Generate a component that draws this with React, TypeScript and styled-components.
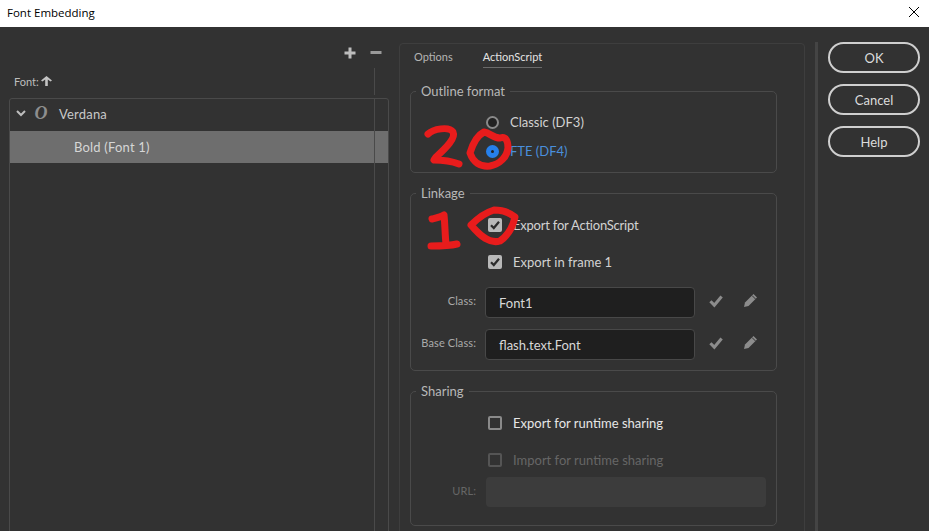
import React from 'react';
import styled, { createGlobalStyle } from 'styled-components';

const BG = '#323232';
const LINE = '#4a4a4a';
const TEXT = '#c8c8c8';
const FONT = '"Lato", "Noto Sans", sans-serif';

const GlobalStyle = createGlobalStyle`
  html, body {
    margin: 0;
    padding: 0;
    background: ${BG};
  }
`;

const Dialog = styled.div`
  position: relative;
  width: 929px;
  height: 531px;
  overflow: hidden;
  display: flex;
  flex-direction: column;
  background: ${BG};
  font-family: ${FONT};
  font-size: 13px;
  color: ${TEXT};
`;

const TitleBar = styled.div`
  height: 27px;
  flex: none;
  display: flex;
  align-items: center;
  justify-content: space-between;
  padding: 0 9px 3px 7px;
  box-sizing: border-box;
  background: #fff;
  color: #000;
  font-family: "Open Sans", sans-serif;
  font-size: 11.5px;
`;

const Body = styled.div`
  flex: 1;
  display: flex;
  padding-top: 15px;
  min-height: 0;
`;

const FontsColumn = styled.div`
  width: 380px;
  margin: 0 10px 0 9px;
  flex: none;
  display: flex;
  flex-direction: column;
`;

const FontsToolbar = styled.div`
  height: 26px;
  display: flex;
  align-items: flex-start;
  justify-content: flex-end;
  gap: 14px;
  padding: 5px 7px 0 0;
  box-sizing: border-box;
`;

const FontsHeader = styled.div`
  height: 27px;
  display: flex;
  align-items: flex-start;
  gap: 2px;
  padding-left: 5px;
  font-size: 11px;
  line-height: 14px;
  color: #bdbdbd;
  box-sizing: border-box;
  padding-top: 7px;
  border-right: 1px solid ${LINE};
  margin-right: 14px;
  margin-bottom: 3px;
`;

const FontTree = styled.div`
  flex: 1;
  margin-bottom: -10px;
  display: flex;
  flex-direction: column;
  border: 1px solid ${LINE};
  border-radius: 3px 3px 0 0;
`;

const TreeRow = styled.div<{ $selected?: boolean }>`
  height: 32px;
  flex: none;
  display: flex;
  letter-spacing: 0.2px;
  background: ${(p) => (p.$selected ? '#6e6e6e' : 'transparent')};
  color: ${(p) => (p.$selected ? '#d6d6d6' : TEXT)};
`;

const TreeCell = styled.div<{ $indent: number; $lift: number }>`
  flex: 1;
  display: flex;
  align-items: center;
  padding-left: ${(p) => p.$indent}px;
  padding-bottom: ${(p) => p.$lift}px;
  border-right: 1px solid ${LINE};
  margin-right: 13px;
`;

const TreeFiller = styled.div`
  flex: 1;
  border-right: 1px solid ${LINE};
  margin-right: 13px;
`;

const FontGlyph = styled.span`
  width: 14px;
  margin: 0 11px 0 8px;
  font-family: "Liberation Serif", serif;
  font-style: italic;
  font-weight: bold;
  font-size: 18px;
  color: #8e8e8e;
  text-align: center;
`;

const SettingsPanel = styled.div`
  width: 406px;
  flex: none;
  margin-top: 1px;
  margin-bottom: -10px;
  padding: 0 27px 0 10px;
  box-sizing: border-box;
  border: 1px solid #3e3e3e;
  border-radius: 4px 4px 0 0;
  display: flex;
  flex-direction: column;
`;

const Tabs = styled.div`
  height: 39px;
  flex: none;
  display: flex;
  gap: 30px;
  padding-left: 4px;
  font-size: 11px;
`;

const Tab = styled.div<{ $active?: boolean }>`
  height: 23px;
  line-height: 25px;
  color: ${(p) => (p.$active ? '#e4e4e4' : '#b4b4b4')};
  border-bottom: 1px solid ${(p) => (p.$active ? '#6a6a6a' : 'transparent')};
`;

const Group = styled.fieldset<{ $height: number }>`
  margin: 0 0 12px;
  padding: 0;
  height: ${(p) => p.$height}px;
  box-sizing: border-box;
  min-width: 0;
  border: 1px solid ${LINE};
  border-radius: 5px;
  display: flex;
  flex-direction: column;
`;

const GroupTitle = styled.legend`
  margin-left: 5px;
  padding: 0 5px;
  font-size: 13px;
  line-height: 16px;
  color: #b8b8b8;
`;

const Options = styled.div<{ $top: number; $gap: number; $left: number }>`
  display: flex;
  flex-direction: column;
  gap: ${(p) => p.$gap}px;
  padding: ${(p) => p.$top}px 0 0 ${(p) => p.$left}px;
`;

const OptionRow = styled.div<{ $tone?: 'normal' | 'blue' | 'muted' | 'bright'; $tight?: boolean }>`
  height: 18px;
  display: flex;
  align-items: center;
  letter-spacing: ${(p) => (p.$tight ? '-0.22px' : 'normal')};
  color: ${(p) =>
    p.$tone === 'blue' ? '#4a8fdc' : p.$tone === 'muted' ? '#666' : p.$tone === 'bright' ? '#e6e6e6' : '#d2d2d2'};
`;

const Radio = styled.span<{ $on?: boolean }>`
  width: 13px;
  height: 13px;
  margin-right: 11px;
  box-sizing: border-box;
  border-radius: 50%;
  border: ${(p) => (p.$on ? '5.5px solid #2680eb' : '2px solid #8a8a8a')};
  background: #222;
`;

const CheckBox = styled.span<{ $checked?: boolean; $muted?: boolean }>`
  width: 14px;
  height: 14px;
  margin-right: 11px;
  box-sizing: border-box;
  border-radius: 2px;
  display: flex;
  align-items: center;
  justify-content: center;
  border: 2px solid ${(p) => (p.$checked ? '#b9b9b9' : p.$muted ? '#555' : '#8a8a8a')};
  background: ${(p) => (p.$checked ? '#b9b9b9' : 'transparent')};
`;

const Fields = styled.div<{ $top: number }>`
  display: flex;
  flex-direction: column;
  gap: 11px;
  padding-top: ${(p) => p.$top}px;
`;

const FieldRow = styled.div`
  display: flex;
  align-items: center;
`;

const FieldLabel = styled.span<{ $muted?: boolean }>`
  width: 65px;
  flex: none;
  margin-right: 9px;
  text-align: right;
  font-size: 11px;
  letter-spacing: 0.1px;
  padding-bottom: 4px;
  color: ${(p) => (p.$muted ? '#666' : '#aaa')};
`;

const TextInput = styled.div`
  width: 210px;
  height: 31px;
  flex: none;
  box-sizing: border-box;
  padding-left: 13px;
  line-height: 31px;
  border: 1px solid #484848;
  border-radius: 4px;
  background: #1f1f1f;
  color: #d8d8d8;
`;

const DisabledInput = styled.div`
  width: 280px;
  height: 30px;
  margin-left: 1px;
  border-radius: 4px;
  background: #3c3c3c;
`;

const FieldIcons = styled.div`
  display: flex;
  align-items: center;
  gap: 20px;
  padding: 0 0 4px 14px;
`;

const Divider = styled.div`
  width: 3px;
  flex: none;
  margin: 0 10px 0 10px;
  margin-bottom: -10px;
  background: #444;
`;

const Buttons = styled.div`
  display: flex;
  flex-direction: column;
  gap: 11px;
`;

const DialogButton = styled.button`
  width: 92px;
  height: 31px;
  padding: 0;
  border: 2px solid #cfcfcf;
  border-radius: 16px;
  background: transparent;
  color: #dcdcdc;
  font-family: ${FONT};
  font-size: 13px;
`;

const Scribbles = styled.svg`
  position: absolute;
  left: 0;
  top: 0;
  pointer-events: none;
`;

const Tick = ({ size = 10, color = '#2c2c2c' }: { size?: number; color?: string }) => (
  <svg width={size} height={size} viewBox="0 0 10 10">
    <path d="M1 5.2 L3.8 8 L9 1.8" fill="none" stroke={color} strokeWidth="2.2" />
  </svg>
);

const Pencil = () => (
  <svg width="15" height="15" viewBox="0 0 15 15">
    <path d="M10.5 1 L14 4.5 L5.5 13 L1 14 L2 9.5 Z" fill="#8c8c8c" />
    <path d="M9 2.5 L12.5 6" stroke="#323232" strokeWidth="1" />
  </svg>
);

const App = () => (
  <Dialog>
    <GlobalStyle />
    <TitleBar>
      <span>Font Embedding</span>
      <svg width="12" height="12" viewBox="0 0 12 12">
        <path d="M1 1 L11 11 M11 1 L1 11" stroke="#000" strokeWidth="1" />
      </svg>
    </TitleBar>
    <Body>
      <FontsColumn>
        <FontsToolbar>
          <svg width="12" height="12" viewBox="0 0 12 12">
            <path d="M4.5 0.5 H7.5 V4.5 H11.5 V7.5 H7.5 V11.5 H4.5 V7.5 H0.5 V4.5 H4.5 Z" fill="#bdbdbd" />
          </svg>
          <svg width="12" height="12" viewBox="0 0 12 12">
            <rect x="0.5" y="4" width="11" height="3" fill="#9a9a9a" />
          </svg>
        </FontsToolbar>
        <FontsHeader>
          <span>Font:</span>
          <svg width="11" height="10" viewBox="0 0 11 10" style={{ marginTop: 1 }}>
            <path d="M5.5 0 L11 4.5 L9.5 5.5 L6.8 3.6 V10 H4.2 V3.6 L1.5 5.5 L0 4.5 Z" fill="#c4c4c4" />
          </svg>
        </FontsHeader>
        <FontTree>
          <TreeRow>
            <TreeCell $indent={6} $lift={3}>
              <svg width="10" height="7" viewBox="0 0 10 7">
                <path d="M1 1 L5 5 L9 1" fill="none" stroke="#bdbdbd" strokeWidth="2" />
              </svg>
              <FontGlyph>O</FontGlyph>
              Verdana
            </TreeCell>
          </TreeRow>
          <TreeRow $selected>
            <TreeCell $indent={64} $lift={1}>Bold (Font 1)</TreeCell>
          </TreeRow>
          <TreeFiller />
        </FontTree>
      </FontsColumn>

      <SettingsPanel>
        <Tabs>
          <Tab>Options</Tab>
          <Tab $active>ActionScript</Tab>
        </Tabs>
        <Group $height={90}>
          <GroupTitle>Outline format</GroupTitle>
          <Options $top={14} $gap={11} $left={75}>
            <OptionRow>
              <Radio />
              Classic (DF3)
            </OptionRow>
            <OptionRow $tone="blue">
              <Radio $on />
              FTE (DF4)
            </OptionRow>
          </Options>
        </Group>
        <Group $height={186}>
          <GroupTitle>Linkage</GroupTitle>
          <Options $top={15} $gap={19} $left={77}>
            <OptionRow $tight>
              <CheckBox $checked>
                <Tick />
              </CheckBox>
              Export for ActionScript
            </OptionRow>
            <OptionRow>
              <CheckBox $checked>
                <Tick />
              </CheckBox>
              Export in frame 1
            </OptionRow>
          </Options>
          <Fields $top={16}>
            <FieldRow>
              <FieldLabel>Class:</FieldLabel>
              <TextInput>Font1</TextInput>
              <FieldIcons>
                <Tick size={14} color="#8c8c8c" />
                <Pencil />
              </FieldIcons>
            </FieldRow>
            <FieldRow>
              <FieldLabel>Base Class:</FieldLabel>
              <TextInput>flash.text.Font</TextInput>
              <FieldIcons>
                <Tick size={14} color="#8c8c8c" />
                <Pencil />
              </FieldIcons>
            </FieldRow>
          </Fields>
        </Group>
        <Group $height={143}>
          <GroupTitle>Sharing</GroupTitle>
          <Options $top={15} $gap={19} $left={77}>
            <OptionRow $tone="bright">
              <CheckBox />
              Export for runtime sharing
            </OptionRow>
            <OptionRow $tone="muted">
              <CheckBox $muted />
              Import for runtime sharing
            </OptionRow>
          </Options>
          <Fields $top={8}>
            <FieldRow>
              <FieldLabel $muted>URL:</FieldLabel>
              <DisabledInput />
            </FieldRow>
          </Fields>
        </Group>
      </SettingsPanel>

      <Divider />

      <Buttons>
        <DialogButton>OK</DialogButton>
        <DialogButton>Cancel</DialogButton>
        <DialogButton>Help</DialogButton>
      </Buttons>
    </Body>

    {/* red marker scribbled over the screenshot */}
    <Scribbles width="929" height="531" viewBox="0 0 929 531">
      <g fill="none" stroke="#e81c1c" strokeWidth="7" strokeLinecap="round" strokeLinejoin="round">
        <path d="M428 134 C433 129 449 126 453 132 C456 138 446 148 436 157 L434 160 C441 160 451 161 459 164" />
        <path d="M470 153 C473 143 478 135 484 132 C490 133 493 138 500 138 C506 136 508 141 508 148 C507 157 500 164 490 166 C480 167 473 162 470 153 Z" />
        <path d="M432 219 C436 218 441 217 444 215 C445 224 445 235 446 244 M431 246 C439 246 449 246 457 244" />
        <path d="M471 225 C477 219 484 213 494 210 C503 210 510 213 515 217 C513 226 509 235 500 241 C490 244 481 237 471 225 Z" />
      </g>
    </Scribbles>
  </Dialog>
);

export default App;
